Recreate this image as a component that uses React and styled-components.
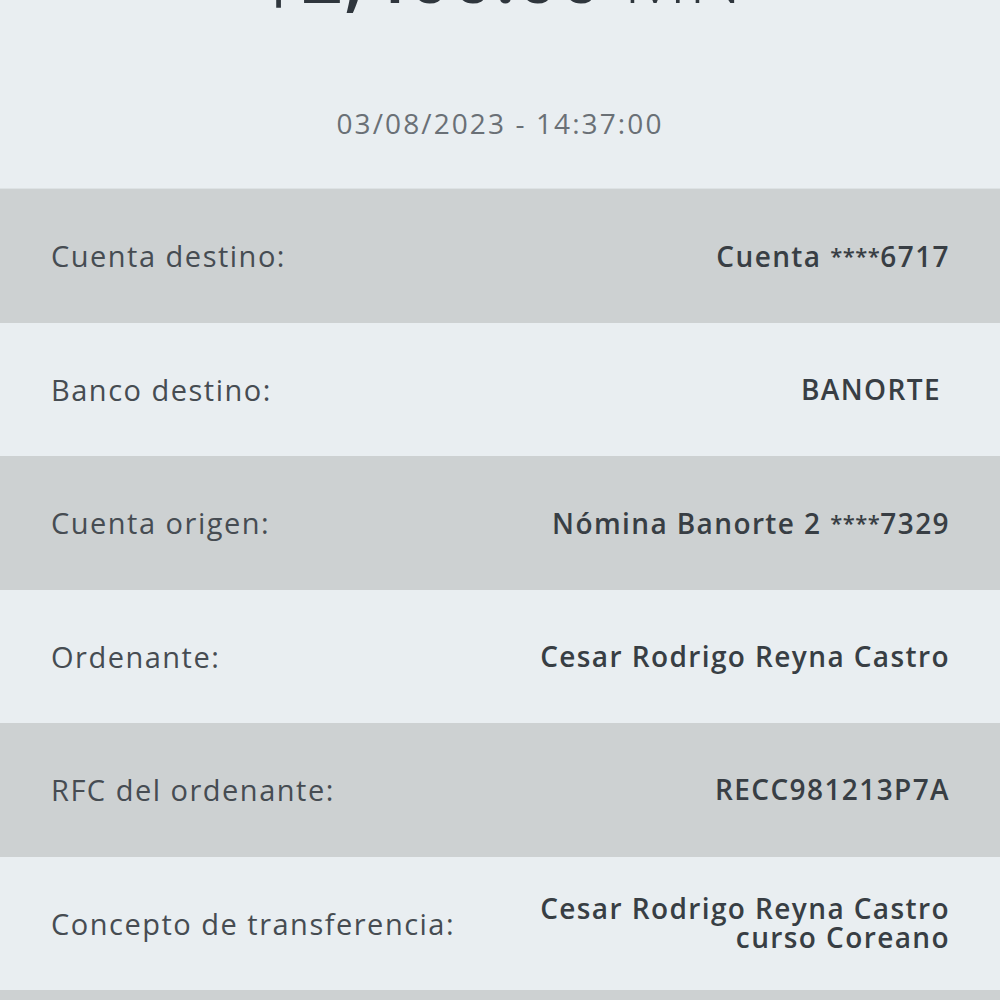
import React from 'react';
import styled, { createGlobalStyle } from 'styled-components';

const GlobalStyle = createGlobalStyle`
  html, body {
    margin: 0;
    padding: 0;
    background: #e9eef1;
    font-family: 'Open Sans', 'Noto Sans', sans-serif;
    overflow: hidden;
  }
`;

const rows = [
  { label: 'Cuenta destino:', value: [['Cuenta ', '****', '6717']], shade: true },
  { label: 'Banco destino:', value: [['BANORTE']], shade: false, inset: 9 },
  { label: 'Cuenta origen:', value: [['Nómina Banorte 2 ', '****', '7329']], shade: true },
  { label: 'Ordenante:', value: [['Cesar Rodrigo Reyna Castro']], shade: false },
  { label: 'RFC del ordenante:', value: [['RECC981213P7A']], shade: true },
  { label: 'Concepto de transferencia:', value: [['Cesar Rodrigo Reyna Castro'], ['curso Coreano']], shade: false },
  { label: '', value: [], shade: true },
];

const App = () => {
  return (
    <>
      <GlobalStyle />
      <Screen>
        <Header>
          <Amount>
            $2,400.00 <Currency>MN</Currency>
          </Amount>
          <DateText>03/08/2023 - 14:37:00</DateText>
        </Header>
        {rows.map((row, i) => (
          <Row key={i} $shade={row.shade}>
            <Label>{row.label}</Label>
            <Value $inset={row.inset}>
              {row.value.map((parts, j) => (
                <div key={j}>
                  {parts.map((part, k) =>
                    k === 1 ? <Stars key={k}>{part}</Stars> : <span key={k}>{part}</span>
                  )}
                </div>
              ))}
            </Value>
          </Row>
        ))}
      </Screen>
    </>
  );
};

const Screen = styled.div`
  width: 1000px;
  height: 1000px;
  overflow: hidden;
  background: #e9eef1;
`;

const Header = styled.div`
  height: 189px;
  display: flex;
  flex-direction: column;
  align-items: center;
  border-bottom: 1px solid #dde2e4;
  box-sizing: border-box;
`;

const Amount = styled.div`
  margin-top: -62px;
  font-size: 74px;
  line-height: 74px;
  font-weight: 600;
  color: #2f363d;
  letter-spacing: 1px;
`;

const Currency = styled.span`
  font-weight: 300;
`;

const DateText = styled.div`
  margin-top: 94px;
  font-size: 28px;
  line-height: 34px;
  color: #6a7076;
  letter-spacing: 2.1px;
`;

const Row = styled.div`
  height: 133.5px;
  display: flex;
  align-items: center;
  justify-content: space-between;
  padding: 0 50px 0 51px;
  box-sizing: border-box;
  background: ${p => (p.$shade ? '#cdd1d2' : '#e9eef1')};
`;

const Label = styled.div`
  font-size: 29px;
  color: #464c52;
  letter-spacing: 1.5px;
`;

const Value = styled.div`
  font-size: 28px;
  line-height: 29px;
  font-weight: 600;
  color: #383e44;
  text-align: right;
  margin-right: ${p => p.$inset || 0}px;
  letter-spacing: 1.4px;
`;

const Stars = styled.span`
  font-size: 22px;
  letter-spacing: 0.5px;
  vertical-align: 3px;
`;

export default App;
